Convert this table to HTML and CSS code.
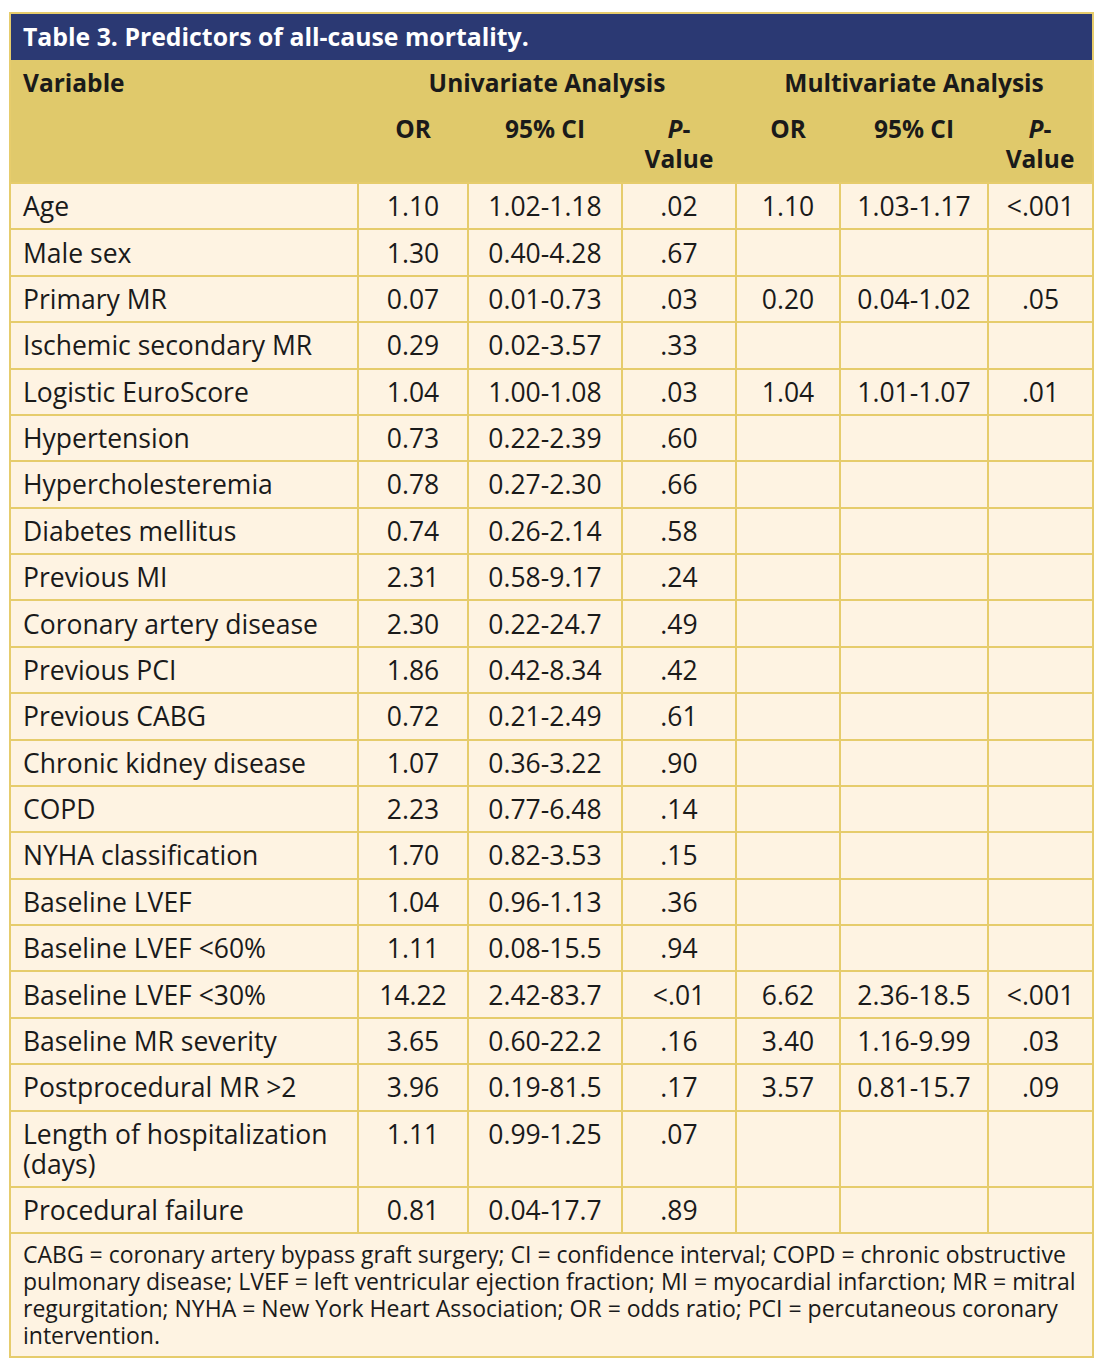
FILE: index.html
```html
<!DOCTYPE html>
<html lang="en">
<head>
<meta charset="utf-8">
<title>Table 3. Predictors of all-cause mortality.</title>
<link rel="stylesheet" href="styles.css">
</head>
<body>
<div class="wrap">
<table class="tbl">
  <colgroup>
    <col class="c-var"><col class="c-or"><col class="c-ci"><col class="c-p">
    <col class="c-or2"><col class="c-ci2"><col class="c-p2">
  </colgroup>
  <thead>
    <tr class="title-row"><th colspan="7" class="title">Table 3. Predictors of all-cause mortality.</th></tr>
    <tr class="head-row">
      <th class="left">Variable</th>
      <th colspan="3">Univariate Analysis</th>
      <th colspan="3">Multivariate Analysis</th>
    </tr>
    <tr class="head-row">
      <th></th>
      <th>OR</th>
      <th>95% CI</th>
      <th><i>P</i>-<br>Value</th>
      <th>OR</th>
      <th>95% CI</th>
      <th><i>P</i>-<br>Value</th>
    </tr>
  </thead>
  <tbody>
    <tr><td>Age</td><td>1.10</td><td>1.02-1.18</td><td>.02</td><td>1.10</td><td>1.03-1.17</td><td>&lt;.001</td></tr>
    <tr><td>Male sex</td><td>1.30</td><td>0.40-4.28</td><td>.67</td><td></td><td></td><td></td></tr>
    <tr><td>Primary MR</td><td>0.07</td><td>0.01-0.73</td><td>.03</td><td>0.20</td><td>0.04-1.02</td><td>.05</td></tr>
    <tr><td>Ischemic secondary MR</td><td>0.29</td><td>0.02-3.57</td><td>.33</td><td></td><td></td><td></td></tr>
    <tr><td>Logistic EuroScore</td><td>1.04</td><td>1.00-1.08</td><td>.03</td><td>1.04</td><td>1.01-1.07</td><td>.01</td></tr>
    <tr><td>Hypertension</td><td>0.73</td><td>0.22-2.39</td><td>.60</td><td></td><td></td><td></td></tr>
    <tr><td>Hypercholesteremia</td><td>0.78</td><td>0.27-2.30</td><td>.66</td><td></td><td></td><td></td></tr>
    <tr><td>Diabetes mellitus</td><td>0.74</td><td>0.26-2.14</td><td>.58</td><td></td><td></td><td></td></tr>
    <tr><td>Previous MI</td><td>2.31</td><td>0.58-9.17</td><td>.24</td><td></td><td></td><td></td></tr>
    <tr><td>Coronary artery disease</td><td>2.30</td><td>0.22-24.7</td><td>.49</td><td></td><td></td><td></td></tr>
    <tr><td>Previous PCI</td><td>1.86</td><td>0.42-8.34</td><td>.42</td><td></td><td></td><td></td></tr>
    <tr><td>Previous CABG</td><td>0.72</td><td>0.21-2.49</td><td>.61</td><td></td><td></td><td></td></tr>
    <tr><td>Chronic kidney disease</td><td>1.07</td><td>0.36-3.22</td><td>.90</td><td></td><td></td><td></td></tr>
    <tr><td>COPD</td><td>2.23</td><td>0.77-6.48</td><td>.14</td><td></td><td></td><td></td></tr>
    <tr><td>NYHA classification</td><td>1.70</td><td>0.82-3.53</td><td>.15</td><td></td><td></td><td></td></tr>
    <tr><td>Baseline LVEF</td><td>1.04</td><td>0.96-1.13</td><td>.36</td><td></td><td></td><td></td></tr>
    <tr><td>Baseline LVEF &lt;60%</td><td>1.11</td><td>0.08-15.5</td><td>.94</td><td></td><td></td><td></td></tr>
    <tr><td>Baseline LVEF &lt;30%</td><td>14.22</td><td>2.42-83.7</td><td>&lt;.01</td><td>6.62</td><td>2.36-18.5</td><td>&lt;.001</td></tr>
    <tr><td>Baseline MR severity</td><td>3.65</td><td>0.60-22.2</td><td>.16</td><td>3.40</td><td>1.16-9.99</td><td>.03</td></tr>
    <tr><td>Postprocedural MR &gt;2</td><td>3.96</td><td>0.19-81.5</td><td>.17</td><td>3.57</td><td>0.81-15.7</td><td>.09</td></tr>
    <tr><td>Length of hospitalization (days)</td><td>1.11</td><td>0.99-1.25</td><td>.07</td><td></td><td></td><td></td></tr>
    <tr><td>Procedural failure</td><td>0.81</td><td>0.04-17.7</td><td>.89</td><td></td><td></td><td></td></tr>
  </tbody>
  <tfoot>
    <tr><td colspan="7" class="note">CABG = coronary artery bypass graft surgery; CI = confidence interval; COPD = chronic obstructive pulmonary disease; LVEF = left ventricular ejection fraction; MI = myocardial infarction; MR = mitral regurgitation; NYHA = New York Heart Association; OR = odds ratio; PCI = percutaneous coronary intervention.</td></tr>
  </tfoot>
</table>
</div>
</body>
</html>
```
FILE: styles.css
```css
html, body {
  margin: 0;
  padding: 0;
  background: #ffffff;
}

.wrap {
  padding: 12px 0 0 9px;
}

.tbl {
  width: 1083px;
  table-layout: fixed;
  border-collapse: collapse;
  font-family: "Open Sans", "Noto Sans", sans-serif;
  color: #1a1a1a;
  background: #fef3e2;
  border: 2px solid #e6cc6c;
}

.c-var { width: 348px; }
.c-or { width: 110px; }
.c-ci { width: 154px; }
.c-p { width: 114px; }
.c-or2 { width: 104px; }
.c-ci2 { width: 148px; }
.c-p2 { width: 105px; }

.title {
  background: #2b3973;
  color: #ffffff;
  text-align: left;
  font-weight: 700;
  font-size: 24.8px;
  line-height: 30px;
  padding: 7px 12px 9px;
  border: none;
}

.head-row th {
  background: #e0c96b;
  font-weight: 700;
  font-size: 24.5px;
  line-height: 30px;
  padding: 8px 6px;
  text-align: center;
  vertical-align: top;
  border: none;
}

.head-row th.left {
  text-align: left;
  padding-left: 12px;
}

.head-row th i {
  font-style: italic;
}

tbody td {
  font-size: 26.5px;
  font-weight: 500;
  line-height: 30px;
  padding: 7.2px 4px;
  text-align: center;
  vertical-align: top;
  border: 2px solid #e6cc6c;
}

tbody td:first-child {
  text-align: left;
  padding-left: 12px;
  padding-right: 10px;
}

.note {
  font-size: 23px;
  font-weight: 500;
  line-height: 27px;
  padding: 7px 12px;
  text-align: left;
  border: 2px solid #e6cc6c;
}
```
